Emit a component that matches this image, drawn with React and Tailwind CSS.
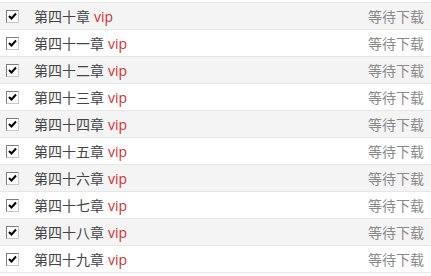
import React from 'react';

const chapters = ['第四十章', '第四十一章', '第四十二章', '第四十三章', '第四十四章', '第四十五章', '第四十六章', '第四十七章', '第四十八章', '第四十九章'];

// old-style windows checkbox, always ticked
const CheckBox = () => (
  <span className="block w-[13px] h-[13px] shrink-0 border border-t-[#7d7d7d] border-l-[#7d7d7d] border-r-[#c8c8c8] border-b-[#c8c8c8] bg-white">
    <svg width="11" height="11" viewBox="0 0 11 11" className="block">
      <path d="M2 5 L4.5 7.5 L9 2.5" fill="none" stroke="#000" strokeWidth="2" />
    </svg>
  </span>
);

export default function App() {
  return (
    <div className="w-[431px] h-[276px] bg-white overflow-hidden pt-[2px]" style={{ fontFamily: '"Microsoft YaHei", "Noto Sans CJK SC", sans-serif' }}>
      <div className="border-t border-[#e6e6e6]">
        {chapters.map((name, i) => (
          <div
            key={name}
            className={`h-[27px] flex items-center border-b border-[#e6e6e6] pl-[6px] pr-[7px] ${i % 2 === 0 ? 'bg-[#f4f4f4]' : 'bg-white'}`}
          >
            <CheckBox />
            <span className="ml-[15px] text-[14px] text-[#444]">{name}</span>
            <span className="ml-[4px] text-[14px] text-[#d32f2f]" style={{ fontFamily: '"Open Sans", "Noto Sans", sans-serif' }}>vip</span>
            <span className="ml-auto text-[14px] text-[#8a8a8a]">等待下载</span>
          </div>
        ))}
      </div>
    </div>
  );
}
